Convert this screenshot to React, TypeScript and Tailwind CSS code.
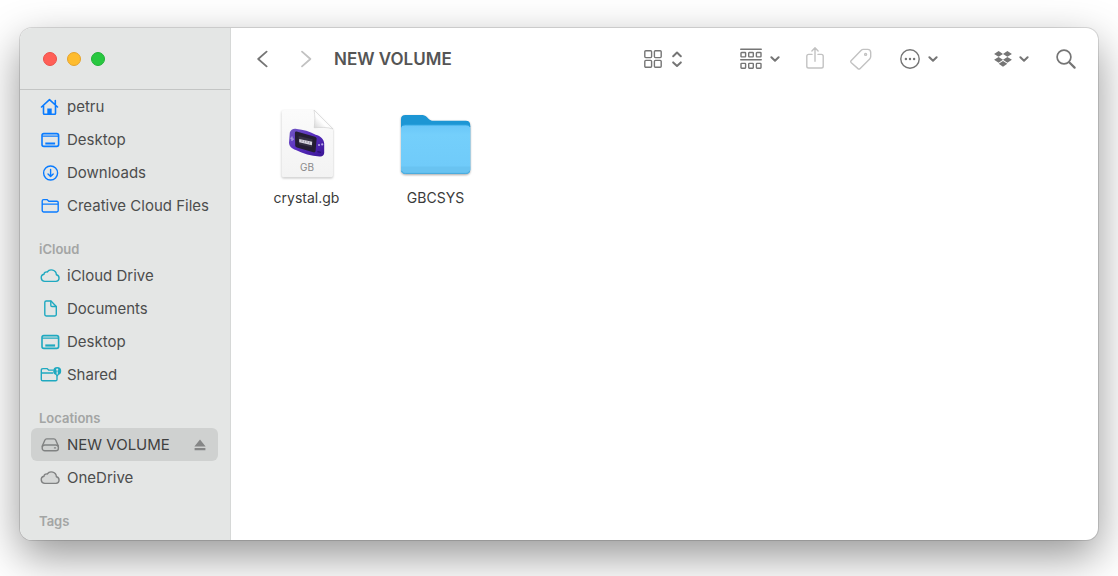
import type { ReactNode } from "react";

const stroke = {
  fill: "none",
  stroke: "currentColor",
  strokeWidth: 1.4,
  strokeLinecap: "round" as const,
  strokeLinejoin: "round" as const,
};

/* Sidebar icons, all on a 20x20 grid */
function HomeIcon() {
  return (
    <svg viewBox="0 0 20 20" className="size-5" {...stroke}>
      <path d="M1.500 10 9.500 2.600l8 7.400M15.300 7.600V3.600M3.500 8.800v7.600c0 .5.300.8.800.8h10.400c.5 0 .8-.3.8-.8V8.800" strokeWidth="1.600" />
      <path d="M7.300 17v-5.400h4.400V17z" fill="currentColor" stroke="none" />
    </svg>
  );
}

function DesktopIcon() {
  return (
    <svg viewBox="0 0 20 20" className="size-5" {...stroke}>
      <rect x="2" y="3.600" width="16.600" height="12.800" rx="1.800" strokeWidth="1.600" />
      <path d="M2.600 6.200h15.400" strokeWidth="1.200" />
      <path d="M5.300 12.400h9.800v2.200H5.300z" fill="currentColor" stroke="none" />
    </svg>
  );
}

function DownloadsIcon() {
  return (
    <svg viewBox="0 0 20 20" className="size-5" {...stroke}>
      <circle cx="10.600" cy="10" r="7" />
      <path d="M10.600 6.400v7M8 10.900l2.600 2.600 2.600-2.600" />
    </svg>
  );
}

function FolderIcon() {
  return (
    <svg viewBox="0 0 20 20" className="size-5" {...stroke}>
      <path d="M2.200 14.600V5c0-.9.5-1.400 1.400-1.400H7l1.800 1.600h8c.9 0 1.400.5 1.400 1.400v8c0 .9-.5 1.400-1.400 1.400H3.600c-.9 0-1.400-.5-1.400-1.400zM2.400 8.100H18" />
    </svg>
  );
}

function CloudIcon({ filled = false }: { filled?: boolean }) {
  return (
    <svg viewBox="0 0 20 20" className="size-5" {...stroke}>
      <path
        d="M4.800 15.400a3.600 3.600 0 0 1-.8-7.100A2.500 2.500 0 0 1 7.200 6a5.100 5.100 0 0 1 9.200 2.700 3.400 3.400 0 0 1-.4 6.700z"
        fill={filled ? "#d6d8d7" : "none"}
      />
    </svg>
  );
}

function DocumentIcon() {
  return (
    <svg viewBox="0 0 20 20" className="size-5" {...stroke}>
      <path d="M6.200 2H11l5.300 5.400v8.200c0 .9-.6 1.400-1.400 1.400H6.200c-.9 0-1.400-.5-1.400-1.400V3.400C4.800 2.500 5.300 2 6.200 2z" />
      <path d="M10.800 2.200v4c0 .8.400 1.300 1.200 1.300h4" />
    </svg>
  );
}

function SharedIcon() {
  return (
    <svg viewBox="0 0 22 20" className="h-5 w-[22px]" {...stroke}>
      <path d="M13 5.100H8.600L7 3.600H3.200c-.9 0-1.900.4-1.900 1.300v9.500c0 .9.500 1.400 1.400 1.400h12.900c.9 0 1.400-.5 1.400-1.400v-3.200M1.500 8h11.300" />
      <circle cx="17.200" cy="6" r="4" fill="currentColor" stroke="none" />
      <path d="M15.400 8.600h3.600l-1 2.600h-1.600z" fill="currentColor" stroke="none" />
      <circle cx="17.200" cy="4.700" r="1.100" fill="#e4e6e5" stroke="none" />
      <path d="M17.200 6.800v2.200" stroke="#e4e6e5" strokeWidth="1.200" />
    </svg>
  );
}

function DriveIcon() {
  return (
    <svg viewBox="0 0 20 20" className="size-5" {...stroke}>
      <path d="M2.200 11.200 4.800 5.200c.4-.9 1-1.300 1.900-1.300h7.200c.9 0 1.500.4 1.900 1.300l2.600 6" />
      <rect x="2.200" y="10" width="16.200" height="5.800" rx="2.600" />
      <path d="M14.500 12.900h1" />
    </svg>
  );
}

function Chevron() {
  return (
    <svg viewBox="0 0 10 8" className="h-2 w-2.5" {...stroke} strokeWidth={2}>
      <path d="M1.400 2.200 5 5.800l3.600-3.600" />
    </svg>
  );
}

function Row({
  icon,
  label,
  tone,
  selected = false,
}: {
  icon: ReactNode;
  label: string;
  tone: string;
  selected?: boolean;
}) {
  return (
    <li
      className={`flex h-[33px] items-center rounded-md ${selected ? "bg-[#cfd1d0] text-[#3f4040]" : "text-[#4c4d4d]"}`}
    >
      <a href="#" className="flex min-w-0 flex-1 items-center pl-[9px]">
        <span className={`flex w-[27px] shrink-0 ${tone}`}>{icon}</span>
        <span className="truncate text-[15px] leading-5">{label}</span>
      </a>
      {selected && (
        <button type="button" aria-label="Eject" className="mr-3 text-[#858686]">
          <svg viewBox="0 0 12 12" className="size-3" fill="currentColor">
            <path d="M6 .6 11.6 7.4H.4zM.6 9h10.8v2.2H.6z" />
          </svg>
        </button>
      )}
    </li>
  );
}

function SectionTitle({ children }: { children: ReactNode }) {
  return (
    <h2 className="mt-[18px] pl-2 text-[13px] leading-[19px] font-semibold text-[#a3a5a4]">
      {children}
    </h2>
  );
}

function Sidebar() {
  const blue = "text-[#0a7cff]";
  const teal = "text-[#1fa9c0]";
  const gray = "text-[#808282]";

  return (
    <aside className="flex w-[211px] shrink-0 flex-col border-r border-[#d6d8d7] bg-[#e4e6e5]">
      <div className="flex h-[62px] shrink-0 items-center gap-2.5 border-b border-[#c3c5c4] pl-[23px]">
        <button type="button" aria-label="Close" className="size-3.5 rounded-full border border-[#ec5049] bg-[#ff5f57]" />
        <button type="button" aria-label="Minimize" className="size-3.5 rounded-full border border-[#e5a32c] bg-[#febc2e]" />
        <button type="button" aria-label="Zoom" className="size-3.5 rounded-full border border-[#20b236] bg-[#28c840]" />
      </div>
      <nav className="min-h-0 flex-1 overflow-hidden pr-3 pl-[11px]">
        <ul>
          <Row icon={<HomeIcon />} label="petru" tone={blue} />
          <Row icon={<DesktopIcon />} label="Desktop" tone={blue} />
          <Row icon={<DownloadsIcon />} label="Downloads" tone={blue} />
          <Row icon={<FolderIcon />} label="Creative Cloud Files" tone={blue} />
        </ul>
        <SectionTitle>iCloud</SectionTitle>
        <ul>
          <Row icon={<CloudIcon />} label="iCloud Drive" tone={teal} />
          <Row icon={<DocumentIcon />} label="Documents" tone={teal} />
          <Row icon={<DesktopIcon />} label="Desktop" tone={teal} />
          <Row icon={<SharedIcon />} label="Shared" tone={teal} />
        </ul>
        <SectionTitle>Locations</SectionTitle>
        <ul>
          <Row icon={<DriveIcon />} label="NEW VOLUME" tone={gray} selected />
          <Row icon={<CloudIcon filled />} label="OneDrive" tone={gray} />
        </ul>
        <SectionTitle>Tags</SectionTitle>
      </nav>
    </aside>
  );
}

function Toolbar() {
  return (
    <header className="flex h-[62px] shrink-0 items-center pr-[22px] pl-[26px] text-[#757575]">
      <button type="button" aria-label="Back">
        <svg viewBox="0 0 12 18" className="h-[18px] w-3" {...stroke} strokeWidth={1.8}>
          <path d="M9.600 1.600 1.200 9l8.400 7.400" />
        </svg>
      </button>
      <button type="button" aria-label="Forward" className="ml-[31px] text-[#c2c2c2]">
        <svg viewBox="0 0 12 18" className="h-[18px] w-3" {...stroke} strokeWidth={1.8}>
          <path d="M2 1.600 10.400 9 2 16.400" />
        </svg>
      </button>
      <h1 className="ml-[22px] text-[17px] leading-6 font-semibold text-[#555]">NEW VOLUME</h1>

      <div className="ml-auto flex items-center">
        <button type="button" aria-label="View as icons" className="flex items-center gap-2.5">
          <svg viewBox="0 0 18 18" className="size-[18px]" {...stroke}>
            <rect x=".8" y=".8" width="6.8" height="6.8" rx="1" />
            <rect x="10.4" y=".8" width="6.8" height="6.8" rx="1" />
            <rect x=".8" y="10.4" width="6.8" height="6.8" rx="1" />
            <rect x="10.4" y="10.4" width="6.8" height="6.8" rx="1" />
          </svg>
          <svg viewBox="0 0 10 18" className="h-[18px] w-2.5" {...stroke} strokeWidth={2}>
            <path d="M1.200 6.200 5 2.600l3.800 3.600M1.200 12.400 5 16l3.800-3.600" />
          </svg>
        </button>
        <button type="button" aria-label="Group" className="ml-[58px] flex items-center gap-2">
          <svg viewBox="0 0 22 22" className="size-[22px]" {...stroke}>
            <path d="M.8 1.200h20.400M.8 11.800h20.400" strokeWidth="1.600" />
            <rect x="1" y="4.500" width="4.600" height="4.400" rx=".6" />
            <rect x="8.700" y="4.500" width="4.600" height="4.400" rx=".6" />
            <rect x="16.400" y="4.500" width="4.600" height="4.400" rx=".6" />
            <rect x="1" y="15.400" width="4.600" height="4.800" rx=".6" />
            <rect x="8.700" y="15.400" width="4.600" height="4.800" rx=".6" />
            <rect x="16.400" y="15.400" width="4.600" height="4.800" rx=".6" />
          </svg>
          <Chevron />
        </button>
        <button type="button" aria-label="Share" className="ml-[26px] text-[#c2c2c2]">
          <svg viewBox="0 0 18 24" className="h-6 w-[18px]" {...stroke}>
            <path d="M6 7.400H2.600C1.500 7.400.8 8.100.8 9.200v10c0 1.100.7 1.800 1.800 1.800h12.800c1.100 0 1.800-.7 1.800-1.800v-10c0-1.100-.7-1.800-1.800-1.800H12M9 14.200V.9M5.900 3.900 9 .8l3.100 3.100" />
          </svg>
        </button>
        <button type="button" aria-label="Edit tags" className="ml-[26px] text-[#c2c2c2]">
          <svg viewBox="0 0 22 22" className="size-[22px]" {...stroke}>
            <path d="M1.300 12.400 11 2.400c.7-.7 1.300-1 2.300-1h4.300c1.900 0 3.100 1.200 3.100 3.100v4c0 1-.3 1.700-1 2.400l-9.500 9.500c-.8.8-1.700.8-2.500 0l-6.400-5.600c-.8-.8-.8-1.600 0-2.400z" />
            <circle cx="15.600" cy="6.400" r="1" />
          </svg>
        </button>
        <button type="button" aria-label="More actions" className="ml-7 flex items-center gap-2">
          <svg viewBox="0 0 20 20" className="size-5" {...stroke}>
            <circle cx="10" cy="10" r="9.200" />
            <g fill="currentColor" stroke="none">
              <circle cx="5.900" cy="10" r="1.200" />
              <circle cx="10" cy="10" r="1.200" />
              <circle cx="14.100" cy="10" r="1.200" />
            </g>
          </svg>
          <Chevron />
        </button>
        <button type="button" aria-label="Dropbox" className="ml-14 flex items-center gap-[7px]">
          <svg viewBox="0 0 18 16" className="h-4 w-[18px]" fill="currentColor">
            <path d="m4.600 0 4.400 2.900-4.400 2.900L.1 2.900zM13.400 0l4.500 2.900-4.500 2.900L9 2.900zM4.600 5.900 9 8.800l-4.400 2.900L.1 8.800zM13.400 5.900l4.500 2.900-4.500 2.900L9 8.800zM4.700 12.700 9 10l4.300 2.700L9 15.700z" />
          </svg>
          <Chevron />
        </button>
        <button type="button" aria-label="Search" className="ml-[27px]">
          <svg viewBox="0 0 20 20" className="size-5" {...stroke} strokeWidth={1.700}>
            <circle cx="8" cy="8" r="6.900" />
            <path d="m13.200 13.200 5.400 5.400" strokeWidth="2.200" />
          </svg>
        </button>
      </div>
    </header>
  );
}

function GameBoyFile() {
  return (
    <svg viewBox="0 0 72 72" className="size-[72px] overflow-visible">
      <defs>
        <linearGradient id="page" x1="0" y1="0" x2="0" y2="1">
          <stop offset="0" stopColor="#fbfbfb" />
          <stop offset="1" stopColor="#f3f3f3" />
        </linearGradient>
        <linearGradient id="curl" x1="0" y1="1" x2="1" y2="0">
          <stop offset="0" stopColor="#d2d2d2" />
          <stop offset=".4" stopColor="#ffffff" />
          <stop offset="1" stopColor="#e2e2e2" />
        </linearGradient>
        <linearGradient id="shell" x1="0" y1="0" x2="1" y2="1">
          <stop offset="0" stopColor="#7259c4" />
          <stop offset=".45" stopColor="#5a2fc0" />
          <stop offset="1" stopColor="#3a1595" />
        </linearGradient>
      </defs>
      <path
        d="M13 2h30l19 19v46c0 1.500-.8 2.300-2.300 2.300H13c-1.500 0-2.300-.8-2.300-2.300V4.300C10.700 2.800 11.500 2 13 2z"
        fill="url(#page)"
        className="drop-shadow-[0_1px_1px_rgba(0,0,0,0.25)]"
      />
      <path d="M43 2c1.200 6 1 11 .2 17.800C49 19.200 57 19 62 21z" fill="url(#curl)" stroke="#cdcdcd" strokeWidth=".6" />
      <path
        d="M18.800 24.500c1-3 3.600-4.400 7-3.500 6.600.6 12.500 2.400 18.900 5.700 5 1.200 8.200 4.600 8.500 8.800V45c-.3 2.600-2 3.800-4.700 3.400-8.700-.5-16-2.700-23.700-6.400-4-1.400-6.600-3.700-6.800-7.200z"
        fill="url(#shell)"
      />
      <path d="m25.600 23.600 18.400 5.200c1.200.4 1.800 1.200 1.600 2.500l-1 11.500c-.2 1.300-1 1.800-2.300 1.500l-16.400-4.800c-1.200-.4-1.800-1.200-1.700-2.500l-.3-11.600c0-1.400.6-2 1.700-1.800z" fill="#241d33" />
      <path d="m27.600 28 14 3.200-.6 8-13-3z" fill="#353044" />
      <path d="m28.200 31 13 2.800-.3 3.400-12.700-2.900z" fill="#d7d4df" />
      <path d="M31 32v2M33.400 32.500v2M36 33v2M38.400 33.700v2" stroke="#777184" strokeWidth=".6" />
      <path d="M21 28.500v4.600M19.400 30.200l3.400 1.200" stroke="#a99be0" strokeWidth="1.300" />
      <circle cx="48" cy="37" r="1.100" fill="#b6a9e6" />
      <circle cx="51.200" cy="36.400" r="1.100" fill="#b6a9e6" />
      <path d="m46.400 43.600 3.600.8" stroke="#2b0e76" strokeWidth="1.200" />
      <text x="36" y="63" textAnchor="middle" fontSize="10" fill="#8a8a8a">
        GB
      </text>
    </svg>
  );
}

function BlueFolder() {
  return (
    <svg viewBox="0 0 72 72" className="size-[72px] overflow-visible">
      <defs>
        <linearGradient id="folder-front" x1="0" y1="0" x2="0" y2="1">
          <stop offset="0" stopColor="#69c6f8" />
          <stop offset=".2" stopColor="#74cffb" />
          <stop offset="1" stopColor="#6fcaf9" />
        </linearGradient>
      </defs>
      <path
        d="M1 11.200C1 8.200 2.600 7 5.400 7h15.800c2.400 0 3.900.5 5.600 2.100l1.900 1.800c1.300 1.200 2.500 1.800 4.700 1.800h32.400c2.900 0 4.400 1.500 4.400 4.300v44.600c0 2.900-1.500 4.300-4.400 4.300H5.400C2.600 65.900 1 64.500 1 61.600z"
        fill="#1d96d4"
        className="drop-shadow-[0_1px_1px_rgba(0,0,0,0.35)]"
      />
      <path d="M1 20.800c0-2.900 1.600-3.900 4.400-3.900h60.400c2.900 0 4.400 1 4.400 3.900v40.800c0 2.900-1.500 4.300-4.400 4.300H5.400C2.600 65.900 1 64.500 1 61.600z" fill="url(#folder-front)" />
      <path d="M1.200 19c.6-1.600 2-2.100 4.200-2.100h60.400c2.200 0 3.700.5 4.200 2.100" fill="none" stroke="#2ba1df" strokeWidth="1" />
      <path d="M1 58.500h69.200v3.100c0 2.900-1.500 4.300-4.400 4.300H5.400C2.600 65.900 1 64.500 1 61.600z" fill="#69c3f1" />
      <path d="M1.500 62.800c.8 1.900 2 2.600 3.900 2.600h60.400c2 0 3.200-.7 3.900-2.600" fill="none" stroke="#48a9dc" strokeWidth="1" />
    </svg>
  );
}

function FileItem({ icon, name }: { icon: ReactNode; name: string }) {
  return (
    <li className="w-[129px]">
      <button type="button" className="flex w-full flex-col items-center gap-2 text-[#3a3a3a]">
        {icon}
        <span className="text-[14px] leading-5">{name}</span>
      </button>
    </li>
  );
}

export default function App() {
  return (
    <div className="flex h-screen bg-white px-5 pt-7 pb-9 font-['Inter','Liberation_Sans',sans-serif]">
      <div className="flex min-w-0 flex-1 overflow-hidden rounded-xl bg-white shadow-[0_0_0_1px_rgba(0,0,0,0.12),0_16px_44px_rgba(0,0,0,0.42)]">
        <Sidebar />
        <main className="flex min-w-0 flex-1 flex-col">
          <Toolbar />
          <ul className="flex flex-wrap pt-[18px] pl-[11px]">
            <FileItem icon={<GameBoyFile />} name="crystal.gb" />
            <FileItem icon={<BlueFolder />} name="GBCSYS" />
          </ul>
        </main>
      </div>
    </div>
  );
}
